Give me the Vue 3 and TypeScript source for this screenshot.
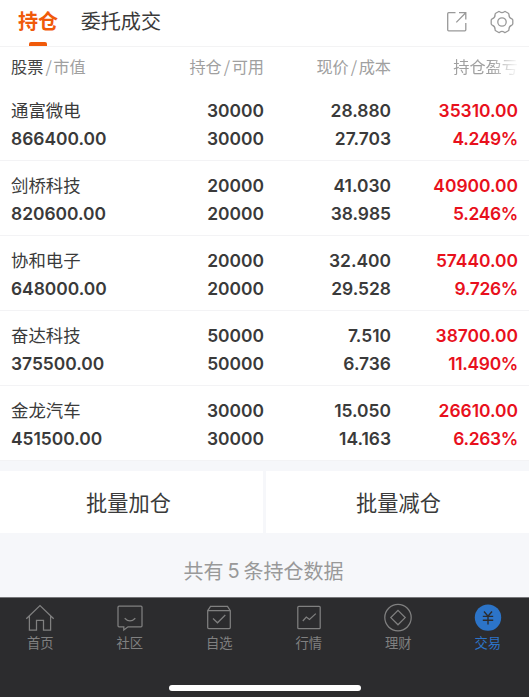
<script setup lang="ts">
interface Holding {
  name: string
  value: string
  held: string
  available: string
  price: string
  cost: string
  profit: string
  rate: string
}

interface NavItem {
  key: string
  label: string
  active?: boolean
}

const holdings: Holding[] = [
  { name: '通富微电', value: '866400.00', held: '30000', available: '30000', price: '28.880', cost: '27.703', profit: '35310.00', rate: '4.249%' },
  { name: '剑桥科技', value: '820600.00', held: '20000', available: '20000', price: '41.030', cost: '38.985', profit: '40900.00', rate: '5.246%' },
  { name: '协和电子', value: '648000.00', held: '20000', available: '20000', price: '32.400', cost: '29.528', profit: '57440.00', rate: '9.726%' },
  { name: '奋达科技', value: '375500.00', held: '50000', available: '50000', price: '7.510', cost: '6.736', profit: '38700.00', rate: '11.490%' },
  { name: '金龙汽车', value: '451500.00', held: '30000', available: '30000', price: '15.050', cost: '14.163', profit: '26610.00', rate: '6.263%' },
]

const navItems: NavItem[] = [
  { key: 'home', label: '首页' },
  { key: 'community', label: '社区' },
  { key: 'favorites', label: '自选' },
  { key: 'market', label: '行情' },
  { key: 'wealth', label: '理财' },
  { key: 'trade', label: '交易', active: true },
]
</script>

<template>
  <div class="screen">
    <header class="tabs">
      <div class="tab active">持仓</div>
      <div class="tab">委托成交</div>
      <div class="tools">
        <svg class="tool" viewBox="0 0 24 24">
          <path d="M10.5 2.7H3.7Q2.7 2.7 2.7 3.7V19.8Q2.7 20.8 3.7 20.8H19.8Q20.8 20.8 20.8 19.8V13M14 2.7H20.8V9.5M20.5 3L11.3 12.4" />
        </svg>
        <svg class="tool" viewBox="0 0 24 24">
          <path d="M8.3 1.7Q9 1.2 9.7 1.8Q12 3.5 14.3 1.8Q15 1.2 15.7 1.7L18.3 3.2Q19 3.6 18.9 4.4Q18.8 7.8 21.8 8.9Q22.8 9.4 22.8 10.2V13.8Q22.8 14.6 21.8 15.1Q18.8 16.2 18.9 19.6Q19 20.4 18.3 20.8L15.7 22.3Q15 22.8 14.3 22.2Q12 20.5 9.7 22.2Q9 22.8 8.3 22.3L5.7 20.8Q5 20.4 5.1 19.6Q5.2 16.2 2.2 15.1Q1.2 14.6 1.2 13.8V10.2Q1.2 9.4 2.2 8.9Q5.2 7.8 5.1 4.4Q5 3.6 5.7 3.2Z" />
          <circle cx="12" cy="12" r="4.2" />
        </svg>
      </div>
    </header>

    <div class="grid head">
      <span><b>股票</b><i>/</i>市值</span>
      <span>持仓<i>/</i>可用</span>
      <span>现价<i>/</i>成本</span>
      <span class="fade">持仓盈亏</span>
    </div>

    <div v-for="row in holdings" :key="row.name" class="grid row">
      <div class="cell"><span class="name">{{ row.name }}</span><span>{{ row.value }}</span></div>
      <div class="cell"><span>{{ row.held }}</span><span>{{ row.available }}</span></div>
      <div class="cell"><span>{{ row.price }}</span><span>{{ row.cost }}</span></div>
      <div class="cell gain"><span>{{ row.profit }}</span><span class="rate">{{ row.rate }}</span></div>
    </div>

    <div class="actions">
      <button type="button">批量加仓</button>
      <button type="button">批量减仓</button>
    </div>

    <div class="summary">共有<span class="count">5</span>条持仓数据</div>

    <nav class="nav">
      <div class="nav-items">
        <div v-for="item in navItems" :key="item.key" class="nav-item" :class="{ active: item.active }">
          <svg class="nav-icon" viewBox="0 0 30 30">
            <path v-if="item.key === 'home'" d="M1.3 15.7L15 2.6L28.7 15.7M4.4 13.2V27H11.5V17.3H18.5V27H25.6V13.2" />
            <template v-else-if="item.key === 'community'">
              <path d="M4 3.2H26Q27 3.2 27 4.2V22.8Q27 23.8 26 23.8H13L8.8 27V23.8H4Q3 23.8 3 22.8V4.2Q3 3.2 4 3.2Z" />
              <path d="M9.7 15.2Q15 20.6 20.3 15.2" />
            </template>
            <template v-else-if="item.key === 'favorites'">
              <path d="M3.7 7.7L6.5 3.4H23.5L26.3 7.7V24.6Q26.3 25.7 25.2 25.7H4.8Q3.7 25.7 3.7 24.6ZM3.7 7.7H26.3M9 15.5L13.5 19.8L21.3 12" />
            </template>
            <template v-else-if="item.key === 'market'">
              <rect x="3.8" y="3.3" width="22.4" height="22.4" rx="1" />
              <path d="M8.8 18L12.3 14L15.5 16.5L21.8 10.6" />
            </template>
            <template v-else-if="item.key === 'wealth'">
              <circle cx="15" cy="14.6" r="13.2" />
              <path d="M15 7.4L22.2 14.6L15 21.8L7.8 14.6Z" />
            </template>
            <template v-else>
              <circle class="coin" cx="15" cy="14.6" r="13.2" />
              <path class="yen" d="M11 8.5L15 13.2L19 8.5M15 13.2V21.4M9.8 13.4H20.2M9.8 17.2H20.2" />
            </template>
          </svg>
          <span>{{ item.label }}</span>
        </div>
      </div>
      <div class="home-bar"></div>
    </nav>
  </div>
</template>

<style>
body {
  margin: 0;
  background: #f6f7fa;
}
</style>

<style scoped>
.screen {
  width: 529px;
  height: 697px;
  overflow: hidden;
  display: flex;
  flex-direction: column;
  background: #f6f7fa;
  color: #3a3a3a;
  font-family: Inter, "Noto Sans CJK SC", sans-serif;
}

.tabs {
  box-sizing: border-box;
  height: 47px;
  flex: none;
  display: flex;
  padding: 0 15px 0 18px;
  gap: 22.5px;
  background: #fff;
  border-bottom: 1px solid #f3f3f4;
}

.tab {
  position: relative;
  font-size: 20.1px;
  line-height: 45px;
}

.tab.active {
  color: #f05a0a;
  font-weight: 600;
}

.tab.active::after {
  content: "";
  position: absolute;
  left: 11px;
  bottom: 0;
  width: 18px;
  height: 4px;
  border-radius: 2px 2px 0 0;
  background: #f05a0a;
}

.tools {
  margin-left: auto;
  display: flex;
  gap: 21px;
  padding-top: 9.5px;
}

.tool {
  width: 24px;
  height: 24px;
  fill: none;
  stroke: #999;
  stroke-width: 1.3;
}

.grid {
  box-sizing: border-box;
  flex: none;
  display: grid;
  grid-template-columns: 132px 121px 127px 127px;
  padding-left: 11px;
  background: #fff;
  text-align: right;
}

.grid > :first-child {
  text-align: left;
}

.head {
  height: 39px;
  line-height: 38px;
  font-family: "Noto Sans CJK SC", sans-serif;
  font-size: 16.2px;
  color: #a0a0a0;
}

.head b {
  color: #444;
  font-weight: 400;
}

.head i {
  font-style: normal;
  margin: 0 1.5px 0 2px;
}

.fade {
  -webkit-mask-image: linear-gradient(to right, #000 100px, transparent 128px);
  mask-image: linear-gradient(to right, #000 100px, transparent 128px);
}

.row {
  height: 75px;
  padding-top: 11px;
  border-bottom: 1px solid #f3f3f5;
  font-size: 17.4px;
  font-weight: 600;
}

.cell {
  display: flex;
  flex-direction: column;
  line-height: 28px;
}

.name {
  font-size: 17.4px;
  font-weight: 400;
}

.gain {
  color: #e8101c;
}

.rate {
  letter-spacing: -0.3px;
}

.actions {
  flex: none;
  display: grid;
  grid-template-columns: 263px 263px;
  gap: 3px;
  margin-top: 10px;
}

.actions button {
  height: 62px;
  padding: 0 6px 2px 0;
  border: 0;
  background: #fff;
  color: #3a3a3a;
  font-family: inherit;
  font-size: 21.2px;
}

.actions button:last-child {
  padding: 0 0 2px 2px;
}

.summary {
  flex: 1;
  display: flex;
  align-items: center;
  justify-content: center;
  padding: 11px 2px 0 0;
  font-size: 20px;
  color: #999;
}

.count {
  margin: 0 4px;
}

.nav {
  box-sizing: border-box;
  height: 100px;
  flex: none;
  display: flex;
  flex-direction: column;
  justify-content: space-between;
  align-items: center;
  padding: 5px 0 6px;
  background: #2c2c2e;
  border-top: 1px solid #77777a;
}

.nav-items {
  display: grid;
  grid-template-columns: repeat(6, 89.5px);
  width: 538px;
}

.nav-item {
  display: flex;
  flex-direction: column;
  align-items: center;
  color: #808080;
  font-size: 13.3px;
  line-height: 21px;
}

.nav-item.active {
  color: #2c74c8;
}

.nav-icon {
  width: 30px;
  height: 30px;
  fill: none;
  stroke: #808080;
  stroke-width: 1.25;
}

.nav-icon .coin {
  fill: #2c74c8;
  stroke: none;
}

.nav-icon .yen {
  stroke: #2c2c2e;
  stroke-width: 1.4;
}

.home-bar {
  width: 192px;
  height: 6px;
  border-radius: 3px;
  background: #fff;
}
</style>
